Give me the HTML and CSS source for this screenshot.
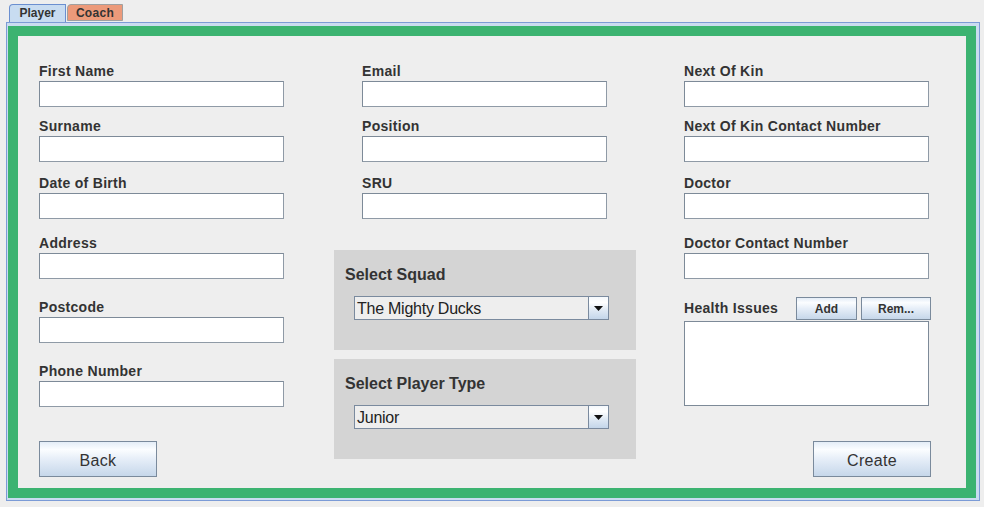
FILE: index.html
```html
<!DOCTYPE html>
<html>
<head>
<meta charset="utf-8">
<link rel="stylesheet" href="styles.css">
</head>
<body>
<div class="tabs">
  <div class="tab tab-player">Player</div>
  <div class="tab tab-coach">Coach</div>
</div>
<div class="panel">
  <div class="frame">
    <div class="content">
      <div class="col col-left">
        <div class="group g1"><div class="label">First Name</div><input class="field" type="text"></div>
        <div class="group g2"><div class="label">Surname</div><input class="field" type="text"></div>
        <div class="group g3"><div class="label">Date of Birth</div><input class="field" type="text"></div>
        <div class="group g4"><div class="label">Address</div><input class="field" type="text"></div>
        <div class="group g5"><div class="label">Postcode</div><input class="field" type="text"></div>
        <div class="group g5"><div class="label">Phone Number</div><input class="field" type="text"></div>
        <button class="btn btn-big btn-back">Back</button>
      </div>
      <div class="col col-mid">
        <div class="group g1 indent"><div class="label">Email</div><input class="field" type="text"></div>
        <div class="group g2 indent"><div class="label">Position</div><input class="field" type="text"></div>
        <div class="group g3 indent"><div class="label">SRU</div><input class="field" type="text"></div>
        <div class="box box-squad">
          <div class="box-title">Select Squad</div>
          <div class="combo"><span class="combo-text">The Mighty Ducks</span><span class="combo-btn"><svg width="9" height="5" viewBox="0 0 9 5"><path d="M0 0H9L4.5 5Z" fill="#111"/></svg></span></div>
        </div>
        <div class="box box-type">
          <div class="box-title">Select Player Type</div>
          <div class="combo"><span class="combo-text">Junior</span><span class="combo-btn"><svg width="9" height="5" viewBox="0 0 9 5"><path d="M0 0H9L4.5 5Z" fill="#111"/></svg></span></div>
        </div>
      </div>
      <div class="col col-right">
        <div class="group g1"><div class="label">Next Of Kin</div><input class="field" type="text"></div>
        <div class="group g2"><div class="label">Next Of Kin Contact Number</div><input class="field" type="text"></div>
        <div class="group g3"><div class="label">Doctor</div><input class="field" type="text"></div>
        <div class="group g4"><div class="label">Doctor Contact Number</div><input class="field" type="text"></div>
        <div class="health-row">
          <div class="label health-label">Health Issues</div>
          <button class="btn btn-small btn-add">Add</button>
          <button class="btn btn-small btn-rem">Rem...</button>
        </div>
        <textarea class="area"></textarea>
        <button class="btn btn-big btn-create">Create</button>
      </div>
    </div>
  </div>
</div>
</body>
</html>
```
FILE: styles.css
```css
* { box-sizing: border-box; }
html, body { margin: 0; padding: 0; }
body {
  width: 984px;
  height: 507px;
  background: #eeeeee;
  font-family: "Liberation Sans", Arial, sans-serif;
  color: #333;
  overflow: hidden;
}
.tabs {
  display: flex;
  gap: 1px;
  height: 22px;
  padding: 4px 0 0 9px;
}
.tab {
  height: 18px;
  font-size: 12px;
  font-weight: bold;
  line-height: 16px;
  text-align: center;
  color: #333;
  border-top-left-radius: 4px;
}
.tab-player {
  width: 57px;
  background: #c8dcf1;
  border: 1px solid #6b8fd0;
  border-bottom: none;
}
.tab-coach {
  width: 56px;
  height: 17px;
  background: #ec9a7a;
  border: 1px solid #a0a0a0;
  letter-spacing: 0.3px;
}
.panel {
  margin-left: 6px;
  width: 974px;
  border: 1px solid #7b9bd6;
  background: #cadcf0;
  padding: 3px 3px 2px 1px;
}
.frame {
  border: 10px solid #3cb371;
  background: #eeeeee;
  height: 472px;
}
.content {
  display: flex;
  padding: 26px 0 0 21px;
}
.col { display: flex; flex-direction: column; }
.col-left { width: 245px; }
.col-mid { width: 302px; margin-left: 50px; }
.col-right { width: 247px; margin-left: 48px; }
.group { display: flex; flex-direction: column; width: 245px; }
.indent { margin-left: 28px; }
.g2 { margin-top: 10px; }
.g3 { margin-top: 12px; }
.g4 { margin-top: 15px; }
.g5 { margin-top: 19px; }
.label {
  font-size: 14px;
  font-weight: bold;
  line-height: 18px;
  height: 19px;
  letter-spacing: 0.3px;
  color: #333;
  white-space: nowrap;
}
.field {
  width: 245px;
  height: 26px;
  background: #fff;
  border: 1px solid #7d8a98;
  border-right-color: #8f9aa6;
  border-bottom-color: #8f9aa6;
  outline: none;
  padding: 0 3px;
}
.btn {
  border: 1px solid #7a8a9c;
  background: linear-gradient(#e4edf7 0%, #fbfdff 22%, #e6eef8 50%, #c6d7ea 100%);
  font-family: "Liberation Sans", Arial, sans-serif;
  color: #333;
  padding: 0;
}
.btn-big {
  width: 118px;
  height: 36px;
  font-size: 16px;
  letter-spacing: 0.3px;
  line-height: 34px;
  padding-top: 2px;
  margin-top: 34px;
}
.btn-create { margin-top: 35px; align-self: flex-end; }
.btn-small {
  height: 23px;
  font-size: 12px;
  font-weight: bold;
}
.btn-add { width: 61px; }
.btn-rem { width: 70px; margin-left: 4px; }
.box {
  width: 302px;
  height: 100px;
  background: #d4d4d4;
  padding: 16px 0 0 11px;
}
.box-squad { margin-top: 31px; }
.box-type { margin-top: 9px; }
.box-title {
  font-size: 16px;
  font-weight: bold;
  line-height: 18px;
  color: #333;
}
.combo {
  margin: 12px 0 0 9px;
  width: 255px;
  height: 24px;
  border: 1px solid #7a8a9e;
  background: #eeeeee;
  display: flex;
}
.combo-text {
  flex: 1;
  font-size: 16px;
  line-height: 23px;
  letter-spacing: -0.25px;
  padding-left: 2px;
  color: #222;
}
.combo-btn {
  width: 20px;
  border-left: 1px solid #7a8a9e;
  background: linear-gradient(#f4f8fc 0%, #ffffff 25%, #dfe9f4 60%, #c4d6ea 100%);
  display: flex;
  align-items: center;
  justify-content: center;
}
.health-row {
  display: flex;
  align-items: center;
  margin-top: 18px;
  height: 23px;
}
.health-label { flex: 1; line-height: 16px; height: 16px; margin-top: -1px; }
.area {
  margin-top: 1px;
  width: 245px;
  height: 85px;
  background: #fff;
  border: 1px solid #7d8a98;
  resize: none;
  outline: none;
}
```
